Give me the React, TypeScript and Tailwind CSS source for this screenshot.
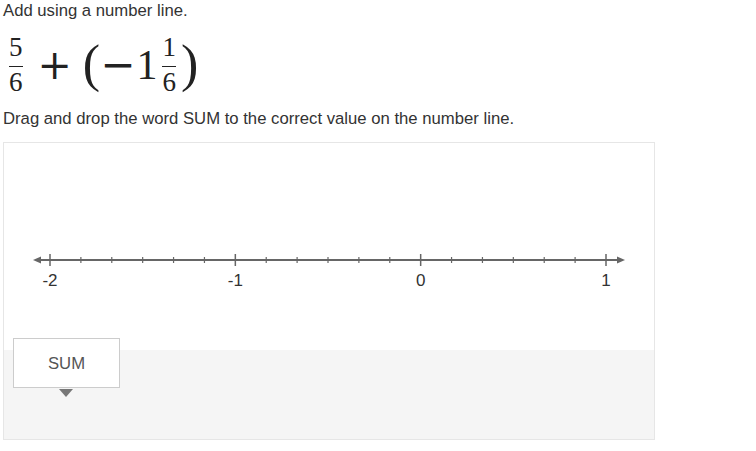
import React from "react";

const times = "font-['Liberation_Serif','Times_New_Roman',serif]";
const dejavu = "font-['DejaVu_Serif','Liberation_Serif',serif]";

function Frac({ top, bottom }: { top: string; bottom: string }) {
  return (
    <span className={`inline-flex flex-col items-center px-[2px] ${times}`}>
      <span className="pb-[5px] text-[27px] leading-[27px]">{top}</span>
      <span className="h-[1px] w-full bg-[#222]" />
      <span className="pt-[2px] text-[27px] leading-[27px]">{bottom}</span>
    </span>
  );
}

function NumberLine() {
  const start = 46;
  const unit = 556 / 3;
  const ticks = Array.from({ length: 19 }, (_, i) => start + (i * unit) / 6);
  const labels = ["-2", "-1", "0", "1"];
  return (
    <svg width="650" height="207" viewBox="0 0 650 207" className="block">
      <line x1="32" y1="117" x2="618" y2="117" stroke="#666" strokeWidth="2" />
      <path d="M29 117 L37 113.5 L37 120.5 Z" fill="#666" />
      <path d="M621 117 L613 113.5 L613 120.5 Z" fill="#666" />
      {ticks.map((x, i) => {
        const major = i % 6 === 0;
        return (
          <line
            key={i}
            x1={x}
            x2={x}
            y1={major ? 111 : 114}
            y2={major ? 123 : 120}
            stroke="#666"
            strokeWidth={major ? 1.5 : 1.2}
          />
        );
      })}
      {labels.map((label, i) => (
        <text
          key={label}
          x={start + i * unit}
          y="143"
          textAnchor="middle"
          fontSize="17"
          fill="#333"
          fontFamily="'Liberation Sans', Arial, sans-serif"
        >
          {label}
        </text>
      ))}
    </svg>
  );
}

export default function App() {
  return (
    <div className="bg-white pl-[3px] font-['Liberation_Sans',Arial,sans-serif] text-[#333]">
      <p className="text-[16.7px] leading-[22px]">Add using a number line.</p>
      <div className="flex h-[86px] items-center text-[#222]">
        <div className="ml-[4px]">
          <Frac top="5" bottom="6" />
        </div>
        <span className={`ml-[13px] text-[41px] leading-none ${dejavu}`}>+</span>
        <span className={`ml-[11px] pb-[2px] text-[52px] leading-none ${times}`}>(</span>
        <span className={`text-[42px] leading-none ${dejavu}`}>−</span>
        <span className={`ml-[1px] text-[42px] leading-none ${times}`}>1</span>
        <span className="ml-[3px]">
          <Frac top="1" bottom="6" />
        </span>
        <span className={`ml-[3px] pb-[2px] text-[52px] leading-none ${times}`}>)</span>
      </div>
      <p className="text-[16.7px] leading-[22px]">
        Drag and drop the word SUM to the correct value on the number line.
      </p>
      <div className="mt-[12px] w-[652px] border border-[#e6e6e6]">
        <NumberLine />
        <div className="flex h-[89px] flex-col bg-[#f5f5f5]">
          <div className="relative -mt-[12px] ml-[9px] flex h-[50px] w-[107px] items-center justify-center border border-[#cccccc] bg-white pt-[2px] text-[16.7px] text-[#555]">
            SUM
            <span className="absolute left-[45px] top-[50px] h-0 w-0 border-x-[7px] border-t-[8px] border-x-transparent border-t-[#777]" />
          </div>
        </div>
      </div>
    </div>
  );
}
